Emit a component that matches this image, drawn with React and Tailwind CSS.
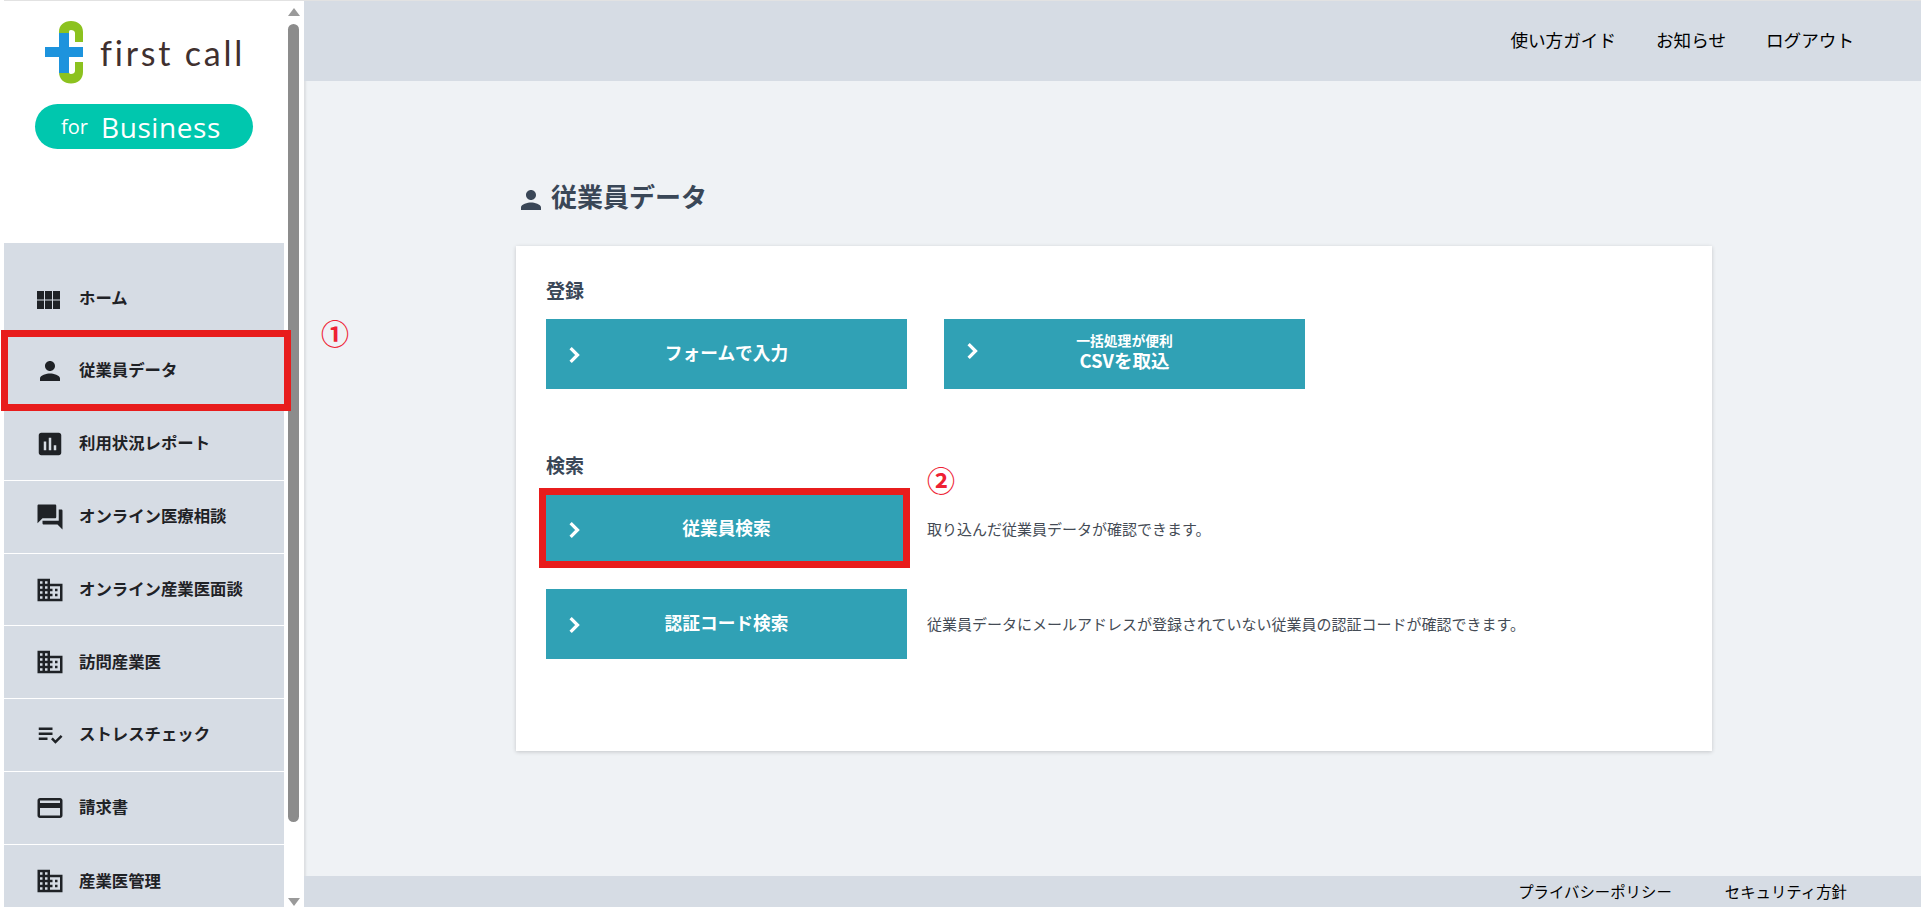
import {
  MdPerson,
  MdAssessment,
  MdForum,
  MdDomain,
  MdPlaylistAddCheck,
  MdCreditCard,
} from 'react-icons/md';

const FONT = "font-['Noto_Sans_CJK_JP','Noto_Sans',sans-serif]";

const GridIcon = ({ className }) => (
  <svg viewBox="0 0 24 24" fill="currentColor" className={className}>
    <rect x="1.6" y="6.4" width="5.6" height="6.8" />
    <rect x="8" y="6.4" width="5.6" height="6.8" />
    <rect x="14.4" y="6.4" width="5.6" height="6.8" />
    <rect x="1.6" y="14" width="5.6" height="6.8" />
    <rect x="8" y="14" width="5.6" height="6.8" />
    <rect x="14.4" y="14" width="5.6" height="6.8" />
  </svg>
);

const Chevron = ({ className }) => (
  <svg viewBox="0 0 24 24" fill="none" stroke="currentColor" strokeWidth="2.6" className={className}>
    <path d="M9.3 6.5L14.8 12L9.3 17.5" />
  </svg>
);

const menuItems = [
  { label: 'ホーム', icon: GridIcon },
  { label: '従業員データ', icon: MdPerson },
  { label: '利用状況レポート', icon: MdAssessment },
  { label: 'オンライン医療相談', icon: MdForum },
  { label: 'オンライン産業医面談', icon: MdDomain },
  { label: '訪問産業医', icon: MdDomain },
  { label: 'ストレスチェック', icon: MdPlaylistAddCheck },
  { label: '請求書', icon: MdCreditCard },
  { label: '産業医管理', icon: MdDomain },
];

const Logo = () => (
  <div className="flex flex-col items-start">
    <div className="flex items-center h-[63px] mt-[21px] ml-[45px]">
      <svg viewBox="0 0 38 63" className="w-[38px] h-[63px]">
        <path d="M14 12V11C14 4 19 0 26 0S38 4 38 11V21H30V12C30 10 28 9 26 9C24 9 24 10 24 12Z" fill="#8cc21f" />
        <path d="M14 50V51C14 58 19 62.5 26 62.5S38 58 38 51V41H30V50C30 52 28 53 26 53C24 53 24 52 24 50Z" fill="#8cc21f" />
        <path d="M14 12H24V26H38V36H24V52H14V36H0V26H14Z" fill="#1d93dd" />
      </svg>
      <span className="font-['Lato',sans-serif] font-normal text-[34px] leading-none tracking-[2.8px] text-[#40302f] ml-[17px] mt-[1px]">
        first call
      </span>
    </div>
    <div className="flex items-center w-[218px] h-[45px] rounded-full bg-[#00c7ae] text-white font-['Open_Sans',sans-serif] mt-[20px] ml-[35px] pl-[26px]">
      <span className="text-[20px] leading-none">for</span>
      <span className="text-[28px] leading-none tracking-[0.6px] ml-[13px]">Business</span>
    </div>
  </div>
);

const Sidebar = () => (
  <aside className="relative w-[304px] h-full shrink-0 bg-white overflow-hidden">
    <div className="h-[243px]">
      <Logo />
    </div>
    <nav className="ml-[4px] mr-[20px] bg-[#d6dce4] pt-[19.5px] h-[664px]">
      {menuItems.map(({ label, icon: Icon }, i) => (
        <a
          key={label}
          className={`flex items-center h-[72.8px] pl-[31px] text-[#1f2226] ${
            i < menuItems.length - 1 ? 'border-b border-white' : ''
          }`}
        >
          <Icon className="w-[30px] h-[30px] shrink-0" />
          <span className="ml-[14px] text-[16.4px] font-bold leading-none pb-[3px]">{label}</span>
        </a>
      ))}
    </nav>
    {/* scrollbar */}
    <div className="absolute left-[288px] top-0 bottom-0 w-[13px]">
      <div className="absolute left-0 top-[8px] w-0 h-0 border-x-[6.5px] border-x-transparent border-b-[8px] border-b-[#9a9a9a]" />
      <div className="absolute left-0 top-[24px] w-[11px] h-[798px] rounded-full bg-[#8c8c8c]" />
      <div className="absolute left-0 bottom-[1px] w-0 h-0 border-x-[6.5px] border-x-transparent border-t-[8px] border-t-[#9a9a9a]" />
    </div>
    {/* annotation */}
    <div className="absolute left-[1px] top-[330px] w-[290px] h-[81px] border-[7px] border-[#e81c1c]" />
  </aside>
);

const ActionButton = ({ children, highlight, twoLine }) => (
  <div className="relative w-[361px] h-[70px] shrink-0 bg-[#30a1b5] text-white flex items-center">
    <Chevron className={`absolute left-[13px] w-[30px] h-[30px] ${twoLine ? 'top-[17px]' : 'top-[21px]'}`} />
    <div className="w-full text-center font-bold text-[17.7px] leading-[22px] pb-[4px]">{children}</div>
    {highlight && (
      <div className="absolute -left-[7px] -top-[6px] -right-[3px] -bottom-[4px] border-[7px] border-[#e81c1c]" />
    )}
  </div>
);

export default function App() {
  return (
    <div className={`relative flex w-full h-[907px] overflow-hidden bg-[#eff2f5] ${FONT}`}>
      <Sidebar />
      <div className="flex-1 min-w-0 flex flex-col shadow-[inset_2px_0_2px_rgba(0,0,0,0.08)]">
        <header className="h-[81px] shrink-0 bg-[#d6dce4] flex items-center justify-end gap-[40px] pr-[67px] text-[17.6px] text-black pb-[1px]">
          <span>使い方ガイド</span>
          <span>お知らせ</span>
          <span>ログアウト</span>
        </header>

        <main className="relative flex-1 pl-[212px]">
          <h1 className="flex items-center mt-[99px] h-[32px] text-[26px] font-bold leading-none text-[#3a4757]">
            <MdPerson className="w-[30px] h-[30px] mt-[7px]" />
            <span className="ml-[5px]">従業員データ</span>
          </h1>

          <section className="w-[1196px] h-[505px] mt-[34px] bg-white shadow-[0_1px_4px_rgba(0,0,0,0.18)] pl-[30px] pt-[31px]">
            <h2 className="text-[19px] font-bold leading-[26px] text-[#3a4757]">登録</h2>
            <div className="flex gap-[37px] mt-[16px]">
              <ActionButton>フォームで入力</ActionButton>
              <ActionButton twoLine>
                <div className="text-[13.8px] leading-[16px]">一括処理が便利</div>
                <div className="text-[18.5px] leading-[24px]">CSVを取込</div>
              </ActionButton>
            </div>

            <h2 className="mt-[63px] text-[19px] font-bold leading-[26px] text-[#3a4757]">検索</h2>
            <div className="flex items-center mt-[16px]">
              <ActionButton highlight>従業員検索</ActionButton>
              <p className="ml-[20px] text-[15px] text-[#444b55] leading-none pb-[2px]">
                取り込んだ従業員データが確認できます。
              </p>
            </div>
            <div className="flex items-center mt-[25px]">
              <ActionButton>認証コード検索</ActionButton>
              <p className="ml-[20px] text-[15px] text-[#444b55] leading-none pb-[2px]">
                従業員データにメールアドレスが登録されていない従業員の認証コードが確認できます。
              </p>
            </div>
          </section>

          {/* annotations */}
          <span className="absolute left-[17px] top-[238px] text-[28px] font-bold leading-none text-[#ee2233]">①</span>
          <span className="absolute left-[623px] top-[385px] text-[28px] font-bold leading-none text-[#ee2233]">②</span>
        </main>

        <footer className="h-[31px] shrink-0 bg-[#d6dce4] flex items-center justify-end gap-[53px] pr-[74px] text-[15.4px] text-black">
          <span>プライバシーポリシー</span>
          <span>セキュリティ方針</span>
        </footer>
      </div>
      {/* thin line along the top of the window */}
      <div className="absolute left-[4px] right-0 top-0 h-px bg-[#e2e2e2]" />
    </div>
  );
}
